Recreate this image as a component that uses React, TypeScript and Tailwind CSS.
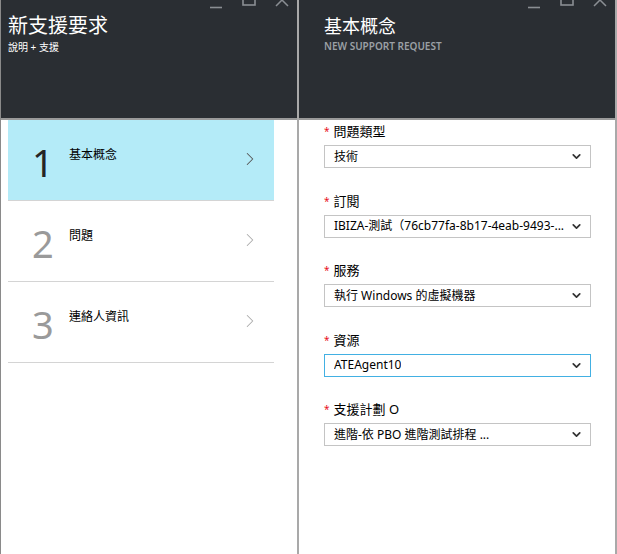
import { ChevronRight, ChevronDown } from 'lucide-react'

const font = { fontFamily: '"Noto Sans", "Noto Sans CJK TC", sans-serif' }

const steps = [
  { n: '1', label: '基本概念', active: true },
  { n: '2', label: '問題', active: false },
  { n: '3', label: '連絡人資訊', active: false },
]

const fields = [
  { label: '問題類型', value: '技術', focus: false },
  { label: '訂閱', value: 'IBIZA-測試（76cb77fa-8b17-4eab-9493-...', focus: false },
  { label: '服務', value: '執行 Windows 的虛擬機器', focus: false },
  { label: '資源', value: 'ATEAgent10', focus: true },
  { label: '支援計劃 O', value: '進階-依 PBO 進階測試排程 ...', focus: false },
]

function WindowButtons() {
  return (
    <div className="absolute -top-[7px] right-[8px] flex items-start gap-[19px] text-[#8a8e93]">
      <svg width="14" height="16" viewBox="0 0 14 16">
        <path d="M1 14.5h12" stroke="currentColor" strokeWidth="1.6" fill="none" />
      </svg>
      <svg width="14" height="14" viewBox="0 0 14 14">
        <rect x="1" y="1" width="12" height="11" stroke="currentColor" strokeWidth="1.6" fill="none" />
      </svg>
      <svg width="14" height="14" viewBox="0 0 14 14">
        <path d="M1 1l12 12M13 1L1 13" stroke="currentColor" strokeWidth="1.5" fill="none" />
      </svg>
    </div>
  )
}

export default function App() {
  return (
    <div className="flex h-[554px] w-[617px] bg-white border-l border-[#8a8a8a]" style={font}>
      {/* left blade */}
      <div className="flex w-[298px] flex-col border-r-2 border-[#a9a9a9]">
        <div className="relative h-[120px] shrink-0 bg-[#2a2e33] border-b-2 border-[#9a9a9a] px-[7px] pt-[12px]">
          <WindowButtons />
          <h1 className="text-[20px] leading-[28px] text-white">新支援要求</h1>
          <p className="text-[10px] leading-[14px] text-white">說明 + 支援</p>
        </div>
        <div className="flex flex-col pl-[7px] pr-[23px]">
          {steps.map((s) => (
            <div
              key={s.n}
              className={`flex h-[81px] items-start border-b border-[#d4d4d4] ${s.active ? 'bg-[#b4ebf8]' : 'bg-white'}`}
            >
              <span
                className={`w-[61px] shrink-0 pl-[24px] pt-[20px] text-[38px] leading-[44px] ${s.active ? 'text-[#252525]' : 'text-[#9a9a9a]'}`}
              >
                {s.n}
              </span>
              <span className="flex-1 pt-[26px] text-[12px] leading-[18px] text-black">{s.label}</span>
              <ChevronRight
                className={`mr-[13px] mt-[28px] ${s.active ? 'text-[#555]' : 'text-[#aaa]'}`}
                size={22}
                strokeWidth={1.1}
              />
            </div>
          ))}
        </div>
      </div>

      {/* right blade */}
      <div className="flex flex-1 flex-col border-r-2 border-[#a9a9a9]">
        <div className="relative h-[120px] shrink-0 bg-[#2a2e33] border-b-2 border-[#9a9a9a] pl-[25px] pt-[13px]">
          <WindowButtons />
          <h2 className="text-[18px] leading-[26px] text-white">基本概念</h2>
          <p className="mt-[1px] text-[10px] font-semibold leading-[13px] text-[#9ba0a5]">NEW SUPPORT REQUEST</p>
        </div>
        <div className="flex flex-col gap-[23.5px] pl-[25px] pr-[24px] pt-[2px]">
          {fields.map((f) => (
            <div key={f.label} className="flex flex-col gap-[5px]">
              <div className="flex items-center gap-[4px] text-[13px] leading-[18px] text-black">
                <span className="text-[10px] text-[#e81123]">*</span>
                {f.label}
              </div>
              <div
                className={`flex h-[23px] items-center justify-between border pl-[9px] pr-[7px] text-[12px] text-black ${f.focus ? 'border-[#42b0e3]' : 'border-[#c4c4c4]'}`}
              >
                <span className="truncate">{f.value}</span>
                <ChevronDown size={13} strokeWidth={3.2} className="shrink-0 text-[#333]" />
              </div>
            </div>
          ))}
        </div>
      </div>
    </div>
  )
}
